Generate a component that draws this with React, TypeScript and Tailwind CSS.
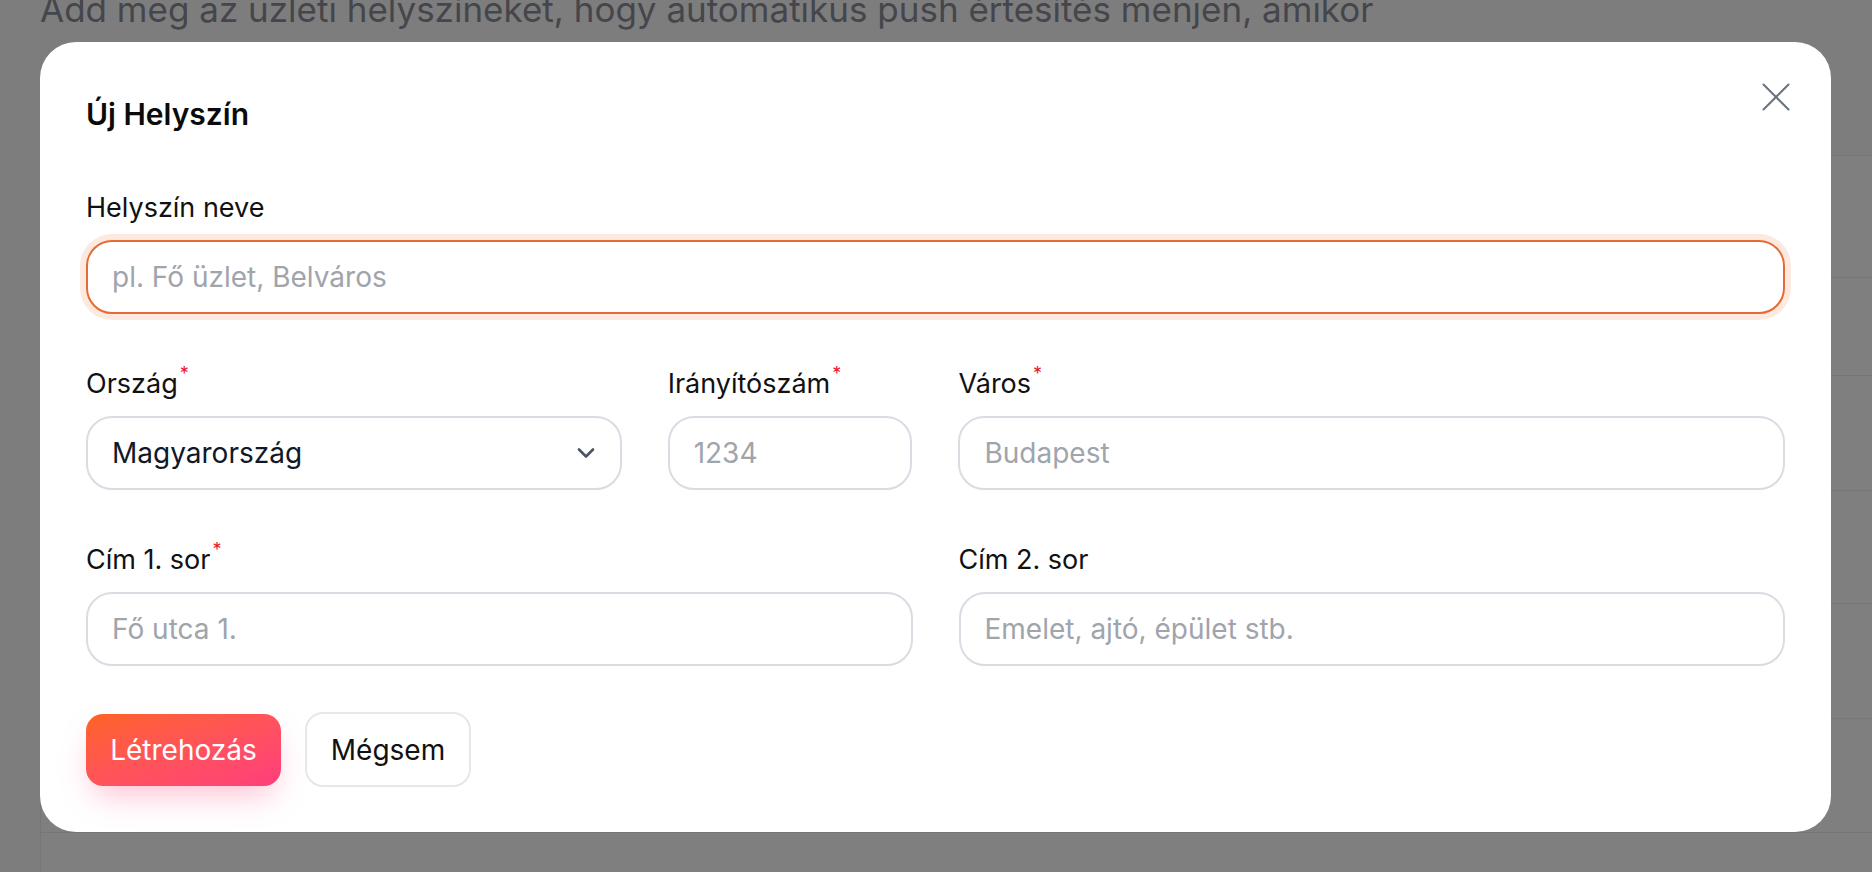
import type { ReactNode } from 'react'

// ---------------------------------------------------------------------------
// Background page (locations list) sitting under the dialog
// ---------------------------------------------------------------------------

const ROW_HEIGHTS = ['h-[122px]', 'h-[98px]', 'h-[115px]', 'h-[113px]', 'h-[115px]', 'h-[114px]', 'h-[114px]']

function LocationsPage() {
  return (
    <div className="pl-[40px]">
      <p className="-mt-[12px] whitespace-nowrap text-[35px] leading-[42px] text-[#8b8d97]">
        Add meg az üzleti helyszíneket, hogy automatikus push értesítés menjen, amikor
      </p>
      <div className="mt-[125px] border-l border-t border-[#ececec] bg-white">
        {ROW_HEIGHTS.map((h, i) => (
          <div key={i} className={`${h} border-b border-[#ececec]`} />
        ))}
      </div>
    </div>
  )
}

// ---------------------------------------------------------------------------
// Form pieces
// ---------------------------------------------------------------------------

function Label({ children, required }: { children: ReactNode; required?: boolean }) {
  return (
    <label className="block text-[27px] leading-[37px] font-normal text-[#111111]">
      {children}
      {required && (
        <span className="relative -top-[13px] ml-[2px] text-[18px] leading-none text-[#e5172f]">*</span>
      )}
    </label>
  )
}

const inputBase =
  'block h-[74px] w-full rounded-[26px] border-2 bg-white px-[24px] text-[28px] text-[#111827] outline-none placeholder:text-[#a0a4ab]'

function TextField({ placeholder, className = '' }: { placeholder: string; className?: string }) {
  return (
    <input
      type="text"
      placeholder={placeholder}
      className={`${inputBase} border-[#d8dde3] ${className}`}
    />
  )
}

function CloseIcon() {
  return (
    <svg width="28" height="28" viewBox="0 0 28 28" fill="none" stroke="#6b7280" strokeWidth="2" strokeLinecap="round">
      <line x1="1.5" y1="1.5" x2="26.5" y2="26.5" />
      <line x1="26.5" y1="1.5" x2="1.5" y2="26.5" />
    </svg>
  )
}

function ChevronDown() {
  return (
    <svg width="18" height="11" viewBox="0 0 18 11" fill="none" stroke="#4b5563" strokeWidth="2.6" strokeLinecap="round" strokeLinejoin="round">
      <polyline points="2,2 9,9 16,2" />
    </svg>
  )
}

// ---------------------------------------------------------------------------
// Dialog
// ---------------------------------------------------------------------------

function NewLocationDialog() {
  return (
    <div className="relative w-[1791px] rounded-[36px] bg-white px-[46px] pt-[46px] pb-[45px]">
      <button type="button" aria-label="Bezárás" className="absolute top-[41px] right-[41px]">
        <CloseIcon />
      </button>

      <h2 className="text-[30px] leading-[52px] font-semibold text-[#0b0b0b]">Új Helyszín</h2>

      {/* Name */}
      <div className="mt-[49px]">
        <Label>Helyszín neve</Label>
        <input
          type="text"
          placeholder="pl. Fő üzlet, Belváros"
          className={`${inputBase} mt-[14px] border-[#e46c33] shadow-[0_0_0_6px_#fde9df]`}
        />
      </div>

      {/* Country / zip / city */}
      <div className="mt-[51px] grid grid-cols-12 gap-x-[46px]">
        <div className="col-span-4">
          <Label required>Ország</Label>
          <div className="relative mt-[14px]">
            <select className={`${inputBase} appearance-none border-[#d8dde3]`} defaultValue="HU">
              <option value="HU">Magyarország</option>
            </select>
            <span className="pointer-events-none absolute top-1/2 right-[27px] flex -translate-y-1/2">
              <ChevronDown />
            </span>
          </div>
        </div>
        <div className="col-span-2">
          <Label required>Irányítószám</Label>
          <TextField placeholder="1234" className="mt-[14px]" />
        </div>
        <div className="col-span-6">
          <Label required>Város</Label>
          <TextField placeholder="Budapest" className="mt-[14px]" />
        </div>
      </div>

      {/* Address lines */}
      <div className="mt-[51px] grid grid-cols-12 gap-x-[46px]">
        <div className="col-span-6">
          <Label required>Cím 1. sor</Label>
          <TextField placeholder="Fő utca 1." className="mt-[14px]" />
        </div>
        <div className="col-span-6">
          <Label>Cím 2. sor</Label>
          <TextField placeholder="Emelet, ajtó, épület stb." className="mt-[14px]" />
        </div>
      </div>

      {/* Actions */}
      <div className="mt-[46px] flex items-center gap-[24px]">
        <button
          type="button"
          className="flex h-[72px] w-[195px] items-center justify-center rounded-[17px] bg-linear-to-br from-[#ff6320] to-[#ff3d7c] text-[28px] font-normal text-white shadow-[0_16px_32px_-8px_rgba(255,70,120,0.35)]"
        >
          Létrehozás
        </button>
        <button
          type="button"
          className="flex h-[75px] w-[166px] items-center justify-center rounded-[18px] border-2 border-[#e6e7ea] bg-white text-[28px] font-normal text-[#111111]"
        >
          Mégsem
        </button>
      </div>
    </div>
  )
}

export default function App() {
  return (
    <div className="relative h-[872px] w-[1872px] overflow-hidden bg-[#fafafb] font-['Inter',sans-serif]">
      <LocationsPage />
      <div className="absolute inset-0 bg-black/50 pt-[42px] pl-[40px]">
        <NewLocationDialog />
      </div>
    </div>
  )
}
